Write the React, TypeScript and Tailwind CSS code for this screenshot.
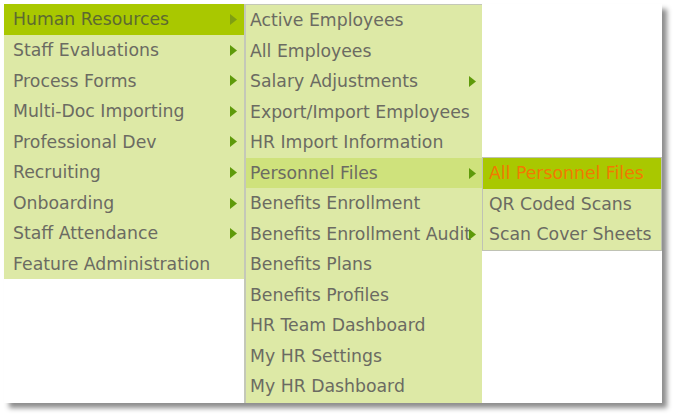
type Item = { label: string; sub?: boolean };

const mainItems: Item[] = [
  { label: "Human Resources", sub: true },
  { label: "Staff Evaluations", sub: true },
  { label: "Process Forms", sub: true },
  { label: "Multi-Doc Importing", sub: true },
  { label: "Professional Dev", sub: true },
  { label: "Recruiting", sub: true },
  { label: "Onboarding", sub: true },
  { label: "Staff Attendance", sub: true },
  { label: "Feature Administration" },
];

const hrItems: Item[] = [
  { label: "Active Employees" },
  { label: "All Employees" },
  { label: "Salary Adjustments", sub: true },
  { label: "Export/Import Employees" },
  { label: "HR Import Information" },
  { label: "Personnel Files", sub: true },
  { label: "Benefits Enrollment" },
  { label: "Benefits Enrollment Audit", sub: true },
  { label: "Benefits Plans" },
  { label: "Benefits Profiles" },
  { label: "HR Team Dashboard" },
  { label: "My HR Settings" },
  { label: "My HR Dashboard" },
];

const fileItems: Item[] = [
  { label: "All Personnel Files" },
  { label: "QR Coded Scans" },
  { label: "Scan Cover Sheets" },
];

function Arrow({ muted }: { muted?: boolean }) {
  return (
    <svg width="7" height="11" viewBox="0 0 7 11" className="shrink-0">
      <path d="M0 0 L7 5.5 L0 11 Z" fill={muted ? "#7f9e12" : "#5e9a0a"} />
    </svg>
  );
}

export default function App() {
  return (
    <div className="w-[676px] h-[415px] bg-white pt-[4px] pl-[4px] font-['DejaVu_Sans',Verdana,sans-serif] text-[17.3px] text-[#6b6b62]">
      <div className="flex items-start w-[658px] h-[399px] bg-white shadow-[5px_5px_5px_rgba(0,0,0,0.45)]">
        <ul className="w-[240px] bg-[#dde9a6]">
          {mainItems.map((it, i) => (
            <li
              key={it.label}
              className={`relative flex items-center h-[30.6px] pl-[9px] pt-[2px] ${
                i === 0 ? "bg-[#a9c800] text-[#5d6a30]" : ""
              }`}
            >
              <span className="whitespace-nowrap">{it.label}</span>
              {it.sub && (
                <span className="absolute right-[7px] top-[10px] flex">
                  <Arrow muted={i === 0} />
                </span>
              )}
            </li>
          ))}
        </ul>
        <ul className="w-[238px] h-[399px] bg-[#dde9a6] border-l-2 border-t border-[#c4c8b8]">
          {hrItems.map((it, i) => (
            <li
              key={it.label}
              className={`relative flex items-center h-[30.5px] pl-[4px] pt-[2px] ${
                i === 5 ? "bg-[#cfe27c]" : ""
              }`}
            >
              <span className="whitespace-nowrap">{it.label}</span>
              {it.sub && (
                <span className="absolute right-[6px] top-[10px] flex">
                  <Arrow />
                </span>
              )}
            </li>
          ))}
        </ul>
        <ul className="mt-[153px] w-[180px] bg-[#dde9a6] border border-[#bfc2b4]">
          {fileItems.map((it, i) => (
            <li
              key={it.label}
              className={`flex items-center h-[30.5px] pl-[6px] pt-[2px] ${
                i === 0 ? "bg-[#a9c800] text-[#f07a00]" : ""
              }`}
            >
              <span className="whitespace-nowrap">{it.label}</span>
            </li>
          ))}
        </ul>
      </div>
    </div>
  );
}
